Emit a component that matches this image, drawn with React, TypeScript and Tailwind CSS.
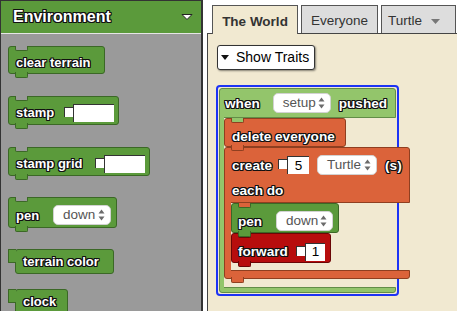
import React from "react";

const SHADOW =
  "[text-shadow:-1px_-1px_0_#111,0_-1px_0_#111,1px_-1px_0_#111,1px_0_0_#111,1px_1px_0_#111,0_1px_0_#111,-1px_1px_0_#111,-1px_0_0_#111]";
const OUT = `text-white font-bold text-[13px] leading-[15px] whitespace-nowrap ${SHADOW}`;
const OUT_W = `text-white font-bold text-[13.6px] leading-[15px] whitespace-nowrap ${SHADOW}`;
const OUT_BIG = `text-white font-bold text-[16px] leading-[18px] whitespace-nowrap ${SHADOW}`;

const G = "bg-[#5b9a3b]";
const GB = "border-[#3b6826]";
const LG = "bg-[#93c56b]";
const LGB = "border-[#628d47]";
const O = "bg-[#db633a]";
const OB = "border-[#8f3f20]";
const R = "bg-[#b70d0d]";
const RB = "border-[#6a0606]";
const GRAY = "bg-[#9a9a9a]";

function L({ children }: { children: React.ReactNode }) {
  return <span className={OUT}>{children}</span>;
}

function W({ children }: { children: React.ReactNode }) {
  return <span className={OUT_W}>{children}</span>;
}

function Arrows() {
  return (
    <svg width="7" height="12" viewBox="0 0 7 12" className="shrink-0">
      <path d="M3.5 0.5L6.5 4.5H0.5Z M3.5 11.5L6.5 7.5H0.5Z" fill="#6b6b6b" />
    </svg>
  );
}

function Dropdown({ text, w, className = "" }: { text: string; w: string; className?: string }) {
  return (
    <div
      className={`${w} h-[20px] shrink-0 bg-white rounded-[5px] border border-[#d2d2d2] flex items-center justify-between pl-[9px] pr-[5px] text-[13.5px] leading-none text-[#555] font-normal ${className}`}
    >
      <span>{text}</span>
      <Arrows />
    </div>
  );
}

function Slot({ w, text = "", className = "" }: { w: string; text?: string; className?: string }) {
  return (
    <div className={`flex items-start shrink-0 ${className}`}>
      <div className="w-[9px] h-[10px] mt-[3px] bg-white border-t border-l border-[#333]" />
      <div
        className={`${w} h-[18px] bg-white border-t border-l border-[#333] flex items-center justify-center text-[13.5px] leading-none text-black font-normal`}
      >
        {text}
      </div>
    </div>
  );
}

type StmtProps = {
  bg: string;
  bd: string;
  notch?: string;
  tab?: boolean;
  className?: string;
  children?: React.ReactNode;
};

function Stmt({ bg, bd, notch, tab = true, className = "", children }: StmtProps) {
  return (
    <div className={`relative shrink-0 border rounded-[3px] flex items-center ${bg} ${bd} ${className}`}>
      {notch && (
        <div className={`absolute -top-px left-[6px] w-[13px] h-[5px] border-x border-b rounded-b-[2px] ${notch} ${bd}`} />
      )}
      {children}
      {tab && (
        <div className={`absolute -bottom-[5px] left-[6px] w-[13px] h-[6px] border-x border-b rounded-b-[2px] z-10 ${bg} ${bd}`} />
      )}
    </div>
  );
}

function Reporter({ w, label, className = "" }: { w: string; label: string; className?: string }) {
  return (
    <div className={`flex items-start shrink-0 ${className}`}>
      <div className={`w-[8px] h-[14px] -mr-px relative z-[1] border-t border-b border-l rounded-l-[1px] ${G} ${GB}`} />
      <div className={`${w} h-[25px] border rounded-[3px] flex items-center pl-[7px] ${G} ${GB}`}>
        <L>{label}</L>
      </div>
    </div>
  );
}

function Flyout() {
  return (
    <div className={`w-[203px] h-full shrink-0 ${GRAY} border-l border-t border-r-2 border-[#333] flex flex-col`}>
      <div className={`h-[33px] shrink-0 ${G} border-b border-[#e6e6e6] flex items-center justify-between pl-[12px] pr-[8px]`}>
        <span className={OUT_BIG}>Environment</span>
        <svg width="12" height="8" viewBox="0 0 12 8">
          <path d="M1 1.5H11L6 6.5Z" fill="#fff" stroke="#222" strokeWidth="1" strokeLinejoin="round" />
        </svg>
      </div>
      <div className="flex flex-col items-start pl-[7px] pt-[12px]">
        <Stmt bg={G} bd={GB} notch={GRAY} className="w-[97px] h-[28px] pt-[4px] pl-[7px]">
          <L>clear terrain</L>
        </Stmt>
        <Stmt bg={G} bd={GB} notch={GRAY} className="mt-[22px] w-[111px] h-[29px] pt-[4px] pl-[7px] pr-[4px]">
          <L>stamp</L>
          <Slot w="w-[41px]" className="ml-auto" />
        </Stmt>
        <Stmt bg={G} bd={GB} notch={GRAY} className="mt-[22px] w-[142px] h-[29px] pt-[4px] pl-[7px] pr-[4px]">
          <L>stamp grid</L>
          <Slot w="w-[41px]" className="ml-auto" />
        </Stmt>
        <Stmt bg={G} bd={GB} notch={GRAY} className="mt-[21px] w-[109px] h-[31px] pt-[5px] pl-[7px] pr-[5px]">
          <L>pen</L>
          <Dropdown text="down" w="w-[58px]" className="ml-auto" />
        </Stmt>
        <Reporter w="w-[99px]" label="terrain color" className="mt-[21px]" />
        <Reporter w="w-[53px]" label="clock" className="mt-[15px]" />
      </div>
    </div>
  );
}

function Tabs() {
  return (
    <div className="h-[33px] shrink-0 flex items-end pl-[5px] gap-[3px]">
      <div className="relative z-10 -mb-px w-[86px] h-[29px] bg-[#f1e9d1] border-x border-t border-[#555] flex items-center justify-center pt-[5px] text-[13.5px] font-bold text-[#333]">
        The World
      </div>
      <div className="w-[77px] h-[28px] bg-[#dddddd] border-x border-t border-[#555] flex items-center justify-center pt-[3px] text-[13.5px] text-[#333]">
        Everyone
      </div>
      <div className="w-[75px] h-[28px] bg-[#dddddd] border-x border-t border-[#555] flex items-center pl-[6px] pt-[3px] text-[13.5px] text-[#333]">
        Turtle
        <svg width="9" height="5" viewBox="0 0 9 5" className="ml-[9px]">
          <path d="M0 0H9L4.5 5Z" fill="#777" />
        </svg>
      </div>
    </div>
  );
}

function Script() {
  return (
    <div className="ml-[8px] mt-[15px] w-max border-2 border-[#1d33f5] rounded-[4px] p-[1px]">
      <div className="w-[177px] flex flex-col">
        {/* hat top */}
        <div className={`h-[30px] border rounded-t-[3px] flex items-center pl-[5px] ${LG} ${LGB}`}>
          <W>when</W>
          <Dropdown text="setup" w="w-[58px]" className="ml-[13px]" />
          <span className="ml-[8px]">
            <W>pushed</W>
          </span>
        </div>
        {/* hat arm + stack */}
        <div className="flex">
          <div className={`w-[5px] shrink-0 relative z-[1] -mt-px -mb-px border-l ${LG} ${LGB}`} />
          <div className="flex flex-col items-start pb-[8px] w-0 overflow-visible">
            <Stmt bg={O} bd={OB} notch={LG} className="w-[122px] h-[29px] pt-[7px] pl-[7px]">
              <W>delete everyone</W>
            </Stmt>
            {/* create C-block */}
            <div className="relative w-[186px] shrink-0 flex flex-col">
              <div className={`relative h-[56px] border rounded-t-[3px] pl-[7px] pt-[7px] ${O} ${OB}`}>
                <div className="flex items-center h-[20px]">
                  <W>create</W>
                  <Slot w="w-[22px]" text="5" className="ml-[6px]" />
                  <Dropdown text="Turtle" w="w-[60px]" className="ml-[8px]" />
                  <span className="ml-[8px]">
                    <W>(s)</W>
                  </span>
                </div>
                <div className="mt-[8px] h-[14px] flex items-center">
                  <W>each do</W>
                </div>
              </div>
              <div className="flex">
                <div className={`w-[7px] shrink-0 relative z-[1] -mt-px -mb-px border-l ${O} ${OB}`} />
                <div className="flex flex-col items-start pb-[7px]">
                  <Stmt bg={G} bd={GB} notch={O} className="w-[108px] h-[30px] pt-[6px] pl-[6px] pr-[5px]">
                    <W>pen</W>
                    <Dropdown text="down" w="w-[57px]" className="ml-auto" />
                  </Stmt>
                  <Stmt bg={R} bd={RB} notch={G} className="w-[100px] h-[30px] pt-[7px] pl-[6px] pr-[5px]">
                    <W>forward</W>
                    <Slot w="w-[20px]" text="1" className="ml-auto" />
                  </Stmt>
                </div>
              </div>
              <Stmt bg={O} bd={OB} className="w-[186px] h-[9px] rounded-t-none" />
            </div>
          </div>
        </div>
        <div className={`h-[6px] border rounded-b-[3px] ${LG} ${LGB}`} />
      </div>
    </div>
  );
}

export default function App() {
  return (
    <div className="w-[457px] h-[311px] overflow-hidden bg-white flex font-['Liberation_Sans',Arial,sans-serif]">
      <Flyout />
      <div className="flex-1 min-w-0 flex flex-col ml-[4px]">
        <Tabs />
        <div className="flex-1 bg-[#f1e9d1] border-l border-t border-[#444] flex flex-col items-start">
          <button className="ml-[9px] mt-[11px] w-[98px] h-[25px] bg-white border border-[#333] rounded-[3px] shadow-[1px_1px_2px_rgba(0,0,0,0.45)] flex items-center pl-[3px] text-[14px] text-black">
            <svg width="8" height="5" viewBox="0 0 8 5" className="shrink-0">
              <path d="M0 0H8L4 5Z" fill="#111" />
            </svg>
            <span className="ml-[7px]">Show Traits</span>
          </button>
          <Script />
        </div>
      </div>
    </div>
  );
}
